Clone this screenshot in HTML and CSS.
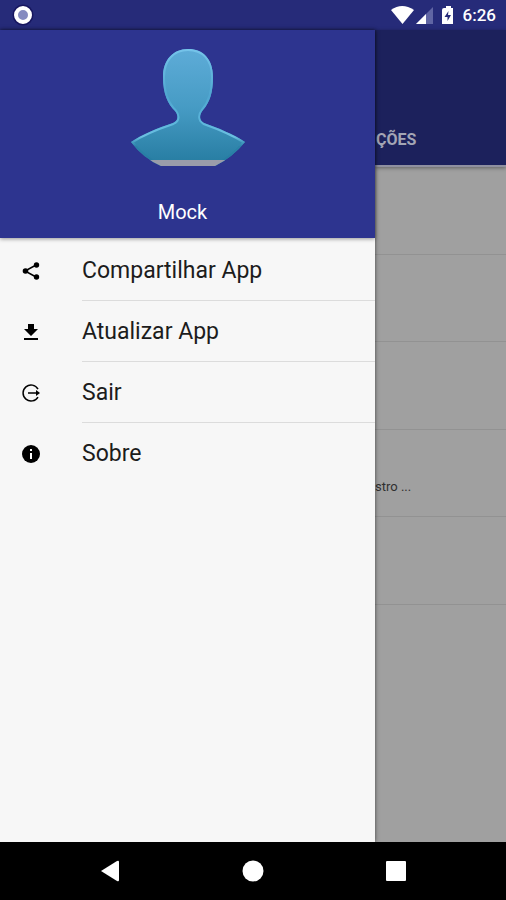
FILE: index.html
```html
<!DOCTYPE html>
<html lang="pt-BR">
<head>
<meta charset="utf-8">
<meta name="viewport" content="width=device-width, initial-scale=1">
<title>Menu</title>
<link rel="stylesheet" href="styles.css">
</head>
<body>
<header class="status">
  <svg class="status-record" width="22" height="22" viewBox="0 0 22 22" aria-hidden="true"><circle cx="11" cy="11" r="10.500" fill="#17165f"/><circle cx="11" cy="11" r="7" fill="#858bc0" stroke="#fff" stroke-width="4"/></svg>
  <div class="status-right">
    <svg width="64" height="22" viewBox="0 0 64 22" class="status-icons" aria-hidden="true">
      <path d="M0 6Q11 -2 23 6L11.500 20Z" fill="#fff"/>
      <path d="M42 3V20H25Z" fill="#6065a4"/><path d="M35 10V20H25Z" fill="#fff"/>
      <path d="M53 4H55V2H60V4H62V20H51V6Q51 4 53 4Z" fill="#fff"/><path d="M57.500 7L53.500 13H56.500V17L60 11H57Z" fill="#262b79"/>
    </svg>
    <time class="clock">6:26</time>
  </div>
</header>
<main class="screen">
  <aside class="drawer">
    <div class="profile">
      <svg class="avatar" width="116" height="120" viewBox="0 0 116 120" aria-hidden="true">
        <defs>
          <linearGradient id="skin" x1="0" y1="0" x2="0" y2="1"><stop offset="0" stop-color="#5eacd8"/><stop offset=".5" stop-color="#469bc4"/><stop offset="1" stop-color="#247a9f"/></linearGradient>
          <linearGradient id="rim" x1="0" y1="0" x2="0" y2="1"><stop offset="0" stop-color="#76c4ea"/><stop offset=".4" stop-color="#4fa6d0"/><stop offset=".6" stop-color="#5ab4da"/><stop offset=".75" stop-color="#6cc0e2"/><stop offset=".83" stop-color="#2b82a9"/><stop offset="1" stop-color="#247a9f"/></linearGradient>
          <clipPath id="bust"><path id="person" d="M58 1C43 1 33 12 33 29C33 46 38 56 45 63C49 68 48 73 43 75C28 80 11 87 1 94Q13 110 31 118H85Q103 109 115 94C103 86 88 80 74 75C69 72 69 67 73 62C80 54 83 44 83 29C83 11 73 1 58 1Z"/></clipPath>
        </defs>
        <g clip-path="url(#bust)">
          <rect width="116" height="120" fill="url(#skin)"/>
          <use href="#person" fill="none" stroke="url(#rim)" stroke-width="4"/>
          <path d="M0 112H116V120H0Z" fill="#9a9caa"/>
        </g>
      </svg>
      <p class="name">Mock</p>
    </div>
    <nav class="menu" aria-label="Menu">
      <a class="item" href="#compartilhar">
        <svg class="icon" width="20" height="20" viewBox="0 0 20 20" aria-hidden="true"><path d="M16 3.500L4 10L16 16.500" fill="none" stroke="#000" stroke-width="1.500"/><circle cx="15.500" cy="4" r="2.700"/><circle cx="4.500" cy="10" r="2.800"/><circle cx="15.500" cy="16" r="2.700"/></svg>
        <span class="label">Compartilhar App</span>
      </a>
      <a class="item" href="#atualizar">
        <svg class="icon" width="20" height="20" viewBox="0 0 20 20" aria-hidden="true"><path d="M7 2H13V7H17L10 14L3 7H7ZM3 16H17V18H3Z"/></svg>
        <span class="label">Atualizar App</span>
      </a>
      <a class="item" href="#sair">
        <svg class="icon" width="20" height="20" viewBox="0 0 20 20" aria-hidden="true"><path d="M17 6A8 8 0 1 0 17 14M7 10H17" fill="none" stroke="#000" stroke-width="1.500"/><path d="M15 7L19 10L15 13Z"/></svg>
        <span class="label">Sair</span>
      </a>
      <a class="item" href="#sobre">
        <svg class="icon" width="20" height="20" viewBox="0 0 20 20" aria-hidden="true"><circle cx="10" cy="10" r="9"/><path d="M9 5H11V7H9ZM9 9H11V15H9Z" fill="#fff"/></svg>
        <span class="label">Sobre</span>
      </a>
    </nav>
  </aside>
  <section class="page">
    <div class="appbar"><span class="tab">ÇÕES</span></div>
    <ul class="rows">
      <li class="row"></li>
      <li class="row"></li>
      <li class="row"></li>
      <li class="row"><span class="excerpt">stro ...</span></li>
      <li class="row"></li>
    </ul>
  </section>
</main>
<footer class="navbar">
  <button class="key" aria-label="Voltar"><svg width="22" height="22" viewBox="0 0 22 22"><path d="M2 11L18 1Q20 0 20 2V20Q20 22 18 21Z" fill="#fff"/></svg></button>
  <button class="key" aria-label="Início"><svg width="22" height="22" viewBox="0 0 22 22"><circle cx="11" cy="11" r="10.500" fill="#fff"/></svg></button>
  <button class="key" aria-label="Recentes"><svg width="22" height="22" viewBox="0 0 22 22"><rect x="1" y="1" width="20" height="20" rx="1" fill="#fff"/></svg></button>
</footer>
</body>
</html>
```
FILE: styles.css
```css
* {
  box-sizing: border-box;
}

body {
  display: flex;
  flex-direction: column;
  min-height: 100vh;
  margin: 0;
  background: #000;
  font-family: Roboto, "Liberation Sans", sans-serif;
}

svg {
  display: block;
}

.status {
  display: flex;
  align-items: center;
  justify-content: space-between;
  height: 30px;
  padding: 0 10px 0 12px;
  background: #262b79;
  color: #fff;
}

.status-right {
  display: flex;
  align-items: center;
}

.status-icons {
  margin-right: 8px;
}

.clock {
  font-size: 17px;
  font-weight: 500;
  line-height: 20px;
}

.screen {
  display: flex;
  flex: 1;
}

.drawer {
  z-index: 1;
  width: 375px;
  max-width: 80%;
  background: #f7f7f7;
  box-shadow: 0 0 4px rgba(0, 0, 0, 0.6);
}

.profile {
  display: flex;
  flex-direction: column;
  align-items: center;
  height: 208px;
  padding: 18px 0 0;
  background: #2d348f;
  box-shadow: 0 1px 4px rgba(0, 0, 0, 0.4);
}

.avatar {
  margin-left: 1px;
}

.name {
  margin: 32px 0 0;
  padding-right: 10px;
  color: #fff;
  font-size: 20px;
  line-height: 24px;
}

.menu {
  padding-top: 2px;
}

.item {
  display: flex;
  align-items: center;
  padding-left: 21px;
  color: #1c1c1c;
  text-decoration: none;
}

.icon {
  flex: none;
  margin-right: 41px;
}

.label {
  flex: 1;
  padding-top: 2px;
  border-bottom: 1px solid #dcdcdc;
  font-size: 23px;
  line-height: 58px;
}

.item:last-child .label {
  border-bottom-color: transparent;
}

.page {
  flex: 1;
  background: #a0a0a0;
}

.appbar {
  display: flex;
  align-items: flex-end;
  height: 137px;
  padding: 0 0 16px 1px;
  border-bottom: 2px solid #8f90a0;
  background: #1c215c;
  box-shadow: 0 1px 4px rgba(0, 0, 0, 0.4);
}

.tab {
  color: #a3a5b5;
  font-size: 16px;
  font-weight: 700;
  line-height: 18px;
}

.rows {
  display: grid;
  grid-template-rows: repeat(5, 1fr);
  height: 438px;
  margin: 0;
  padding: 0;
  list-style: none;
}

.row {
  display: flex;
  align-items: flex-end;
  padding-bottom: 21px;
  border-bottom: 1px solid #929292;
}

.excerpt {
  color: #303030;
  font-size: 13px;
  line-height: 16px;
}

.navbar {
  display: flex;
  align-items: center;
  justify-content: space-between;
  height: 58px;
  padding: 0 99px;
  background: #000;
}

.key {
  padding: 0;
  border: 0;
  background: none;
}
```
